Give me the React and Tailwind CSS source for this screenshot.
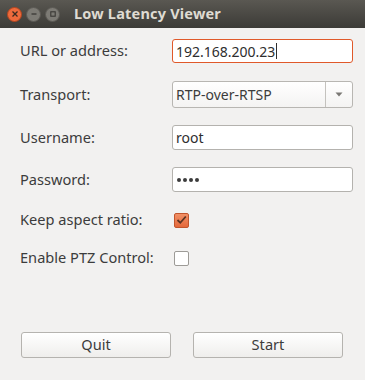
export default function App() {
  const font = { fontFamily: '"Noto Sans", "Open Sans", sans-serif' };
  return (
    <div className="w-[365px] h-[380px] bg-[#f2f1f0] flex flex-col text-[#3c3c3c] overflow-hidden" style={font}>
      {/* Title bar */}
      <div className="h-[28px] bg-gradient-to-b from-[#5a5852] to-[#3c3b37] flex items-center pl-[7px] shrink-0">
        <div className="w-[15px] h-[15px] rounded-full bg-[#ef6a3c] border border-[#b3451f] flex items-center justify-center">
          <svg width="8" height="8" viewBox="0 0 8 8"><path d="M1.5 1.5 L6.5 6.5 M6.5 1.5 L1.5 6.5" stroke="#3c2a20" strokeWidth="1.3" /></svg>
        </div>
        <div className="ml-[4px] w-[15px] h-[15px] rounded-full bg-[#7d7b75] border border-[#5b5954] flex items-center justify-center">
          <svg width="8" height="8" viewBox="0 0 8 8"><path d="M1.5 4 L6.5 4" stroke="#3a3935" strokeWidth="1.3" /></svg>
        </div>
        <div className="ml-[4px] w-[15px] h-[15px] rounded-full bg-[#7d7b75] border border-[#5b5954] flex items-center justify-center">
          <svg width="8" height="8" viewBox="0 0 8 8"><rect x="1.8" y="1.8" width="4.4" height="4.4" fill="none" stroke="#3a3935" strokeWidth="1.1" /></svg>
        </div>
        <div className="ml-[14px] text-[14.5px] font-bold text-[#dfdbd2] tracking-[0.2px]">Low Latency Viewer</div>
      </div>

      <div className="flex flex-col pl-[20px] text-[14.6px]">
        <div className="mt-[11px] h-[24px] flex items-center">
          <div className="w-[152px]">URL or address:</div>
          <div className="w-[181px] h-[24px] rounded-[3px] border border-[#e0592a] bg-white flex items-center pl-[3px] text-[14px] text-[#2e2e2e]">
            192.168.200.23<span className="inline-block w-[1px] h-[16px] bg-[#2e2e2e] ml-[1px]"></span>
          </div>
        </div>

        <div className="mt-[18px] h-[27px] flex items-center">
          <div className="w-[152px]">Transport:</div>
          <div className="w-[181px] h-[27px] rounded-[3px] border border-[#b8b6b2] bg-gradient-to-b from-white to-[#f4f3f2] flex text-[14px]">
            <div className="flex-1 flex items-center pl-[3px] border-r border-[#c4c2be]">RTP-over-RTSP</div>
            <div className="w-[26px] flex items-center justify-center">
              <svg width="8" height="5" viewBox="0 0 8 5"><path d="M0.5 0.5 L7.5 0.5 L4 4.5 Z" fill="#7a7874" /></svg>
            </div>
          </div>
        </div>

        <div className="mt-[17px] h-[25px] flex items-center">
          <div className="w-[152px]">Username:</div>
          <div className="w-[181px] h-[25px] rounded-[3px] border border-[#b4b2ae] bg-white flex items-center pl-[3px] text-[14px] text-[#2e2e2e]">root</div>
        </div>

        <div className="mt-[17px] h-[25px] flex items-center">
          <div className="w-[152px]">Password:</div>
          <div className="w-[181px] h-[25px] rounded-[3px] border border-[#b4b2ae] bg-white flex items-center pl-[4px] gap-[2px]">
            <span className="w-[4px] h-[4px] rounded-full bg-[#3c3c3c]"></span>
            <span className="w-[4px] h-[4px] rounded-full bg-[#3c3c3c]"></span>
            <span className="w-[4px] h-[4px] rounded-full bg-[#3c3c3c]"></span>
            <span className="w-[4px] h-[4px] rounded-full bg-[#3c3c3c]"></span>
          </div>
        </div>

        <div className="mt-[16px] h-[24px] flex items-center">
          <div className="w-[154px]">Keep aspect ratio:</div>
          <div className="w-[15px] h-[15px] rounded-[2px] border border-[#c2552c] bg-gradient-to-b from-[#f19066] to-[#e4683a] flex items-center justify-center">
            <svg width="11" height="10" viewBox="0 0 11 10"><path d="M1.5 5 L4.3 7.8 L9.8 1.5" fill="none" stroke="#5a3322" strokeWidth="1.8" /></svg>
          </div>
        </div>

        <div className="mt-[14px] h-[24px] flex items-center">
          <div className="w-[154px]">Enable PTZ Control:</div>
          <div className="w-[15px] h-[15px] rounded-[2px] border border-[#9d9b97] bg-white"></div>
        </div>

        <div className="mt-[62px] flex gap-[22px] pl-[1px]">
          <div className="w-[150px] h-[26px] rounded-[3px] border border-[#b5b3af] bg-gradient-to-b from-white to-[#efeeec] flex items-center justify-center">Quit</div>
          <div className="w-[150px] h-[26px] rounded-[3px] border border-[#b5b3af] bg-gradient-to-b from-white to-[#efeeec] flex items-center justify-center">Start</div>
        </div>
      </div>
    </div>
  );
}
